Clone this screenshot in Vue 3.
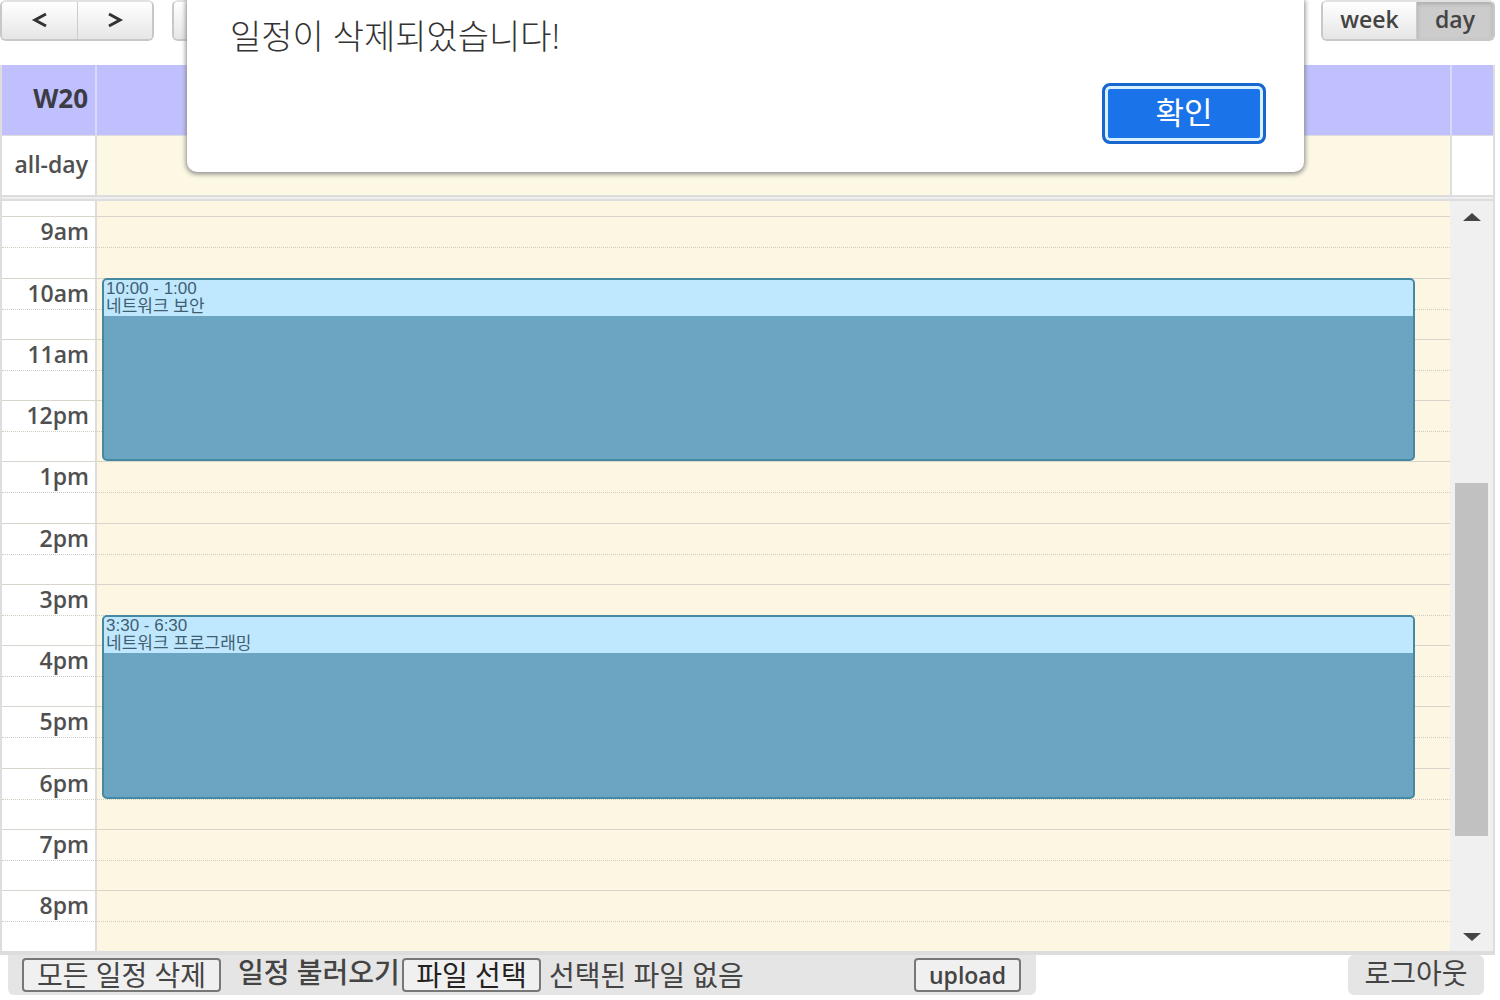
<script setup>
import { ref } from 'vue'

const view = ref('day')
const fileInput = ref(null)

const hours = ['9am', '10am', '11am', '12pm', '1pm', '2pm', '3pm', '4pm', '5pm', '6pm', '7pm', '8pm']

// start and span are counted in half-hour slots from 9am
const events = [
  { time: '10:00 - 1:00', title: '네트워크 보안', start: 2, span: 6 },
  { time: '3:30 - 6:30', title: '네트워크 프로그래밍', start: 13, span: 6 },
]

// grid row 1 is the tail of the 8:30 slot
const row = (slot) => slot + 2
</script>

<template>
  <div class="page">
    <header class="toolbar">
      <div class="group">
        <button class="nav" type="button" aria-label="prev">
          <svg width="18" height="16" viewBox="0 0 18 16"><path d="M15 2 4 8l11 6" /></svg>
        </button>
        <button class="nav" type="button" aria-label="next">
          <svg width="18" height="16" viewBox="0 0 18 16"><path d="m3 2 11 6-11 6" /></svg>
        </button>
      </div>
      <div class="group today"><button class="nav" type="button" aria-label="today"></button></div>
      <div class="group views">
        <button type="button" :class="{ active: view === 'week' }" @click="view = 'week'">week</button>
        <button type="button" :class="{ active: view === 'day' }" @click="view = 'day'">day</button>
      </div>
    </header>

    <main class="calendar">
      <div class="line head">
        <div class="axis">W20</div>
        <div class="cell"></div>
        <div class="gutter"></div>
      </div>
      <div class="line allday">
        <div class="axis">all-day</div>
        <div class="cell"></div>
        <div class="gutter"></div>
      </div>
      <div class="divider"></div>
      <div class="scroller">
        <div class="slots">
          <div class="axis-bg"></div>
          <div class="day-bg"></div>
          <template v-for="(h, i) in hours" :key="h">
            <div class="hour" :style="{ gridRow: row(i * 2) }">{{ h }}</div>
            <div class="half" :style="{ gridRow: row(i * 2 + 1) }"></div>
          </template>
          <a
            v-for="e in events"
            :key="e.title"
            class="event"
            href="#"
            :style="{ gridRow: `${row(e.start)} / span ${e.span}` }"
          >
            <span class="content">
              <span>{{ e.time }}</span>
              <span>{{ e.title }}</span>
            </span>
          </a>
        </div>
        <div class="scrollbar">
          <svg width="18" height="8" viewBox="0 0 18 8"><path d="M0 8 9 0l9 8z" /></svg>
          <div class="track"><div class="thumb"></div></div>
          <svg width="18" height="8" viewBox="0 0 18 8"><path d="M0 0h18L9 8z" /></svg>
        </div>
      </div>
    </main>

    <footer class="footer">
      <form class="panel" @submit.prevent>
        <button class="plain clear" type="button">모든 일정 삭제</button>
        <label for="schedule-file">일정 불러오기</label>
        <button class="plain pick" type="button" @click="fileInput.click()">파일 선택</button>
        <input id="schedule-file" ref="fileInput" type="file" hidden />
        <span class="status">선택된 파일 없음</span>
        <button class="plain upload" type="submit">upload</button>
      </form>
      <a class="logout" href="#">로그아웃</a>
    </footer>

    <div class="dialog" role="alertdialog" aria-labelledby="message">
      <p id="message">일정이 삭제되었습니다!</p>
      <button type="button">확인</button>
    </div>
  </div>
</template>

<style>
body {
  margin: 0;
  background: #fff;
}
</style>

<style scoped>
* {
  box-sizing: border-box;
}

.page {
  position: relative;
  font-family: "Open Sans", "Noto Sans CJK KR", sans-serif;
  font-size: 23px;
  color: #444;
}

button {
  font: inherit;
  color: inherit;
  padding: 0;
}

.toolbar {
  display: flex;
  height: 41px;
  margin: 0 5px 24px 0;
}

.group {
  display: flex;
  border: 2px solid #c8c8c8;
  border-top-color: #e2e2e2;
  border-radius: 6px;
  overflow: hidden;
}

.group button {
  padding-bottom: 4px;
  border: 0;
  background: linear-gradient(#fff, #e6e6e6);
  font-weight: 600;
  line-height: 32px;
}

.group button + button {
  border-left: 1px solid #ccc;
}

.group .nav {
  width: 75px;
}

.nav path {
  fill: none;
  stroke: #333;
  stroke-width: 3;
}

.today {
  margin-left: 18px;
}

.views {
  margin-left: auto;
  width: 174px;
}

.views button {
  flex: 1 1 93px;
}

.views button:last-child {
  flex-basis: 77px;
}

.group .active {
  background: #ccc;
  box-shadow: inset 0 2px 4px #aaa;
}

.calendar {
  margin-right: 5px;
  border: 2px solid #ddd;
  border-top: 0;
}

.line {
  display: grid;
  grid-template-columns: 95px 1fr 43px;
}

.axis {
  padding-right: 7px;
  border-right: 2px solid #ddd;
  color: #505050;
  font-weight: 600;
  text-align: right;
}

.head {
  height: 71px;
  background: #c0c0ff;
  border-bottom: 1px solid #ddd;
  line-height: 66px;
}

.head .axis {
  border-color: #d8d8f8;
  color: #3c3c44;
  font-size: 26px;
  font-weight: 700;
}

.gutter {
  border-left: 2px solid #ddd;
}

.head .gutter {
  border-color: #d8d8f8;
}

.allday {
  height: 59px;
  line-height: 56px;
}

.allday .cell {
  background: #fcf8e3;
}

.divider {
  height: 6px;
  background: #eee;
  border: solid #ddd;
  border-width: 2px 0;
}

.scroller {
  display: flex;
  border-bottom: 2px solid #ddd;
}

.slots {
  flex: 1;
  display: grid;
  grid-template-columns: 95px 1fr;
  grid-template-rows: 15px;
  grid-auto-rows: 31px 31px 31px 30px 31px 30px 31px 30px;
}

.axis-bg {
  grid-area: 1 / 1 / 26 / 2;
  border-right: 2px solid #ddd;
}

.day-bg {
  grid-area: 1 / 2 / 26 / 3;
  background: #fdf6e3;
}

.hour,
.half {
  grid-column: 1 / 3;
  border-top: 1px solid #d8d5cd;
}

.hour {
  padding-right: calc(100% - 87px);
  color: #505050;
  font-weight: 600;
  text-align: right;
  line-height: 28px;
}

.half {
  border-top: 1px dotted #d0ccc0;
}

.event {
  grid-column: 2;
  margin: 0 35px 0 5px;
  border: 2px solid #4588a2;
  border-radius: 5px;
  background: #6ba5c2;
  overflow: hidden;
  color: #3f5f70;
  font-family: "Liberation Sans", "Noto Sans CJK KR", sans-serif;
  font-size: 17px;
  line-height: 18px;
  text-decoration: none;
}

.content {
  display: flex;
  flex-direction: column;
  height: 36px;
  padding-left: 2px;
  background: #bfe8ff;
}

.scrollbar {
  width: 43px;
  display: flex;
  flex-direction: column;
  align-items: center;
  padding: 12px 0 10px;
  background: #f0f0f0;
  fill: #444;
}

.track {
  flex: 1;
  width: 33px;
  padding: 262px 0 97px;
}

.thumb {
  height: 100%;
  background: #c1c1c1;
}

.footer {
  display: flex;
  justify-content: space-between;
  align-items: flex-start;
  padding: 0 16px 0 8px;
  font-size: 28px;
}

.panel {
  width: 1028px;
  height: 40px;
  display: flex;
  align-items: center;
  padding: 0 15px 0 14px;
  background: #e5e5e5;
  border-radius: 0 0 6px 6px;
}

.plain {
  height: 34px;
  border: 2px solid #777;
  border-radius: 4px;
  background: #f0f0f0;
  line-height: 26px;
}

.clear {
  width: 199px;
  margin-right: 17px;
}

.panel label {
  width: 164px;
  padding-bottom: 6px;
  line-height: 30px;
  font-weight: 500;
  white-space: nowrap;
}

.pick {
  width: 139px;
  color: #222;
}

.status {
  margin-left: 8px;
  line-height: 36px;
}

.upload {
  width: 107px;
  margin-left: auto;
  font-size: 23px;
  font-weight: 600;
}

.logout {
  width: 136px;
  height: 40px;
  background: #e5e5e5;
  border-radius: 6px;
  color: inherit;
  line-height: 36px;
  text-align: center;
  text-decoration: none;
}

.dialog {
  position: absolute;
  top: 0;
  left: 187px;
  right: 196px;
  display: flex;
  flex-direction: column;
  align-items: flex-end;
  padding: 16px 38px 28px 43px;
  background: #fff;
  border-radius: 0 0 10px 10px;
  box-shadow: 0 1px 5px 1px #888;
  color: #333;
}

.dialog p {
  align-self: stretch;
  margin: 0 0 27px;
  font-size: 34px;
  line-height: 40px;
  font-weight: 300;
}

.dialog button {
  width: 164px;
  height: 61px;
  padding-bottom: 4px;
  border: 3px solid #1767cf;
  border-radius: 8px;
  background: #1a73e8;
  box-shadow: inset 0 0 0 3px #d8f0ff;
  color: #fff;
  font-size: 31px;
  line-height: 50px;
}
</style>
